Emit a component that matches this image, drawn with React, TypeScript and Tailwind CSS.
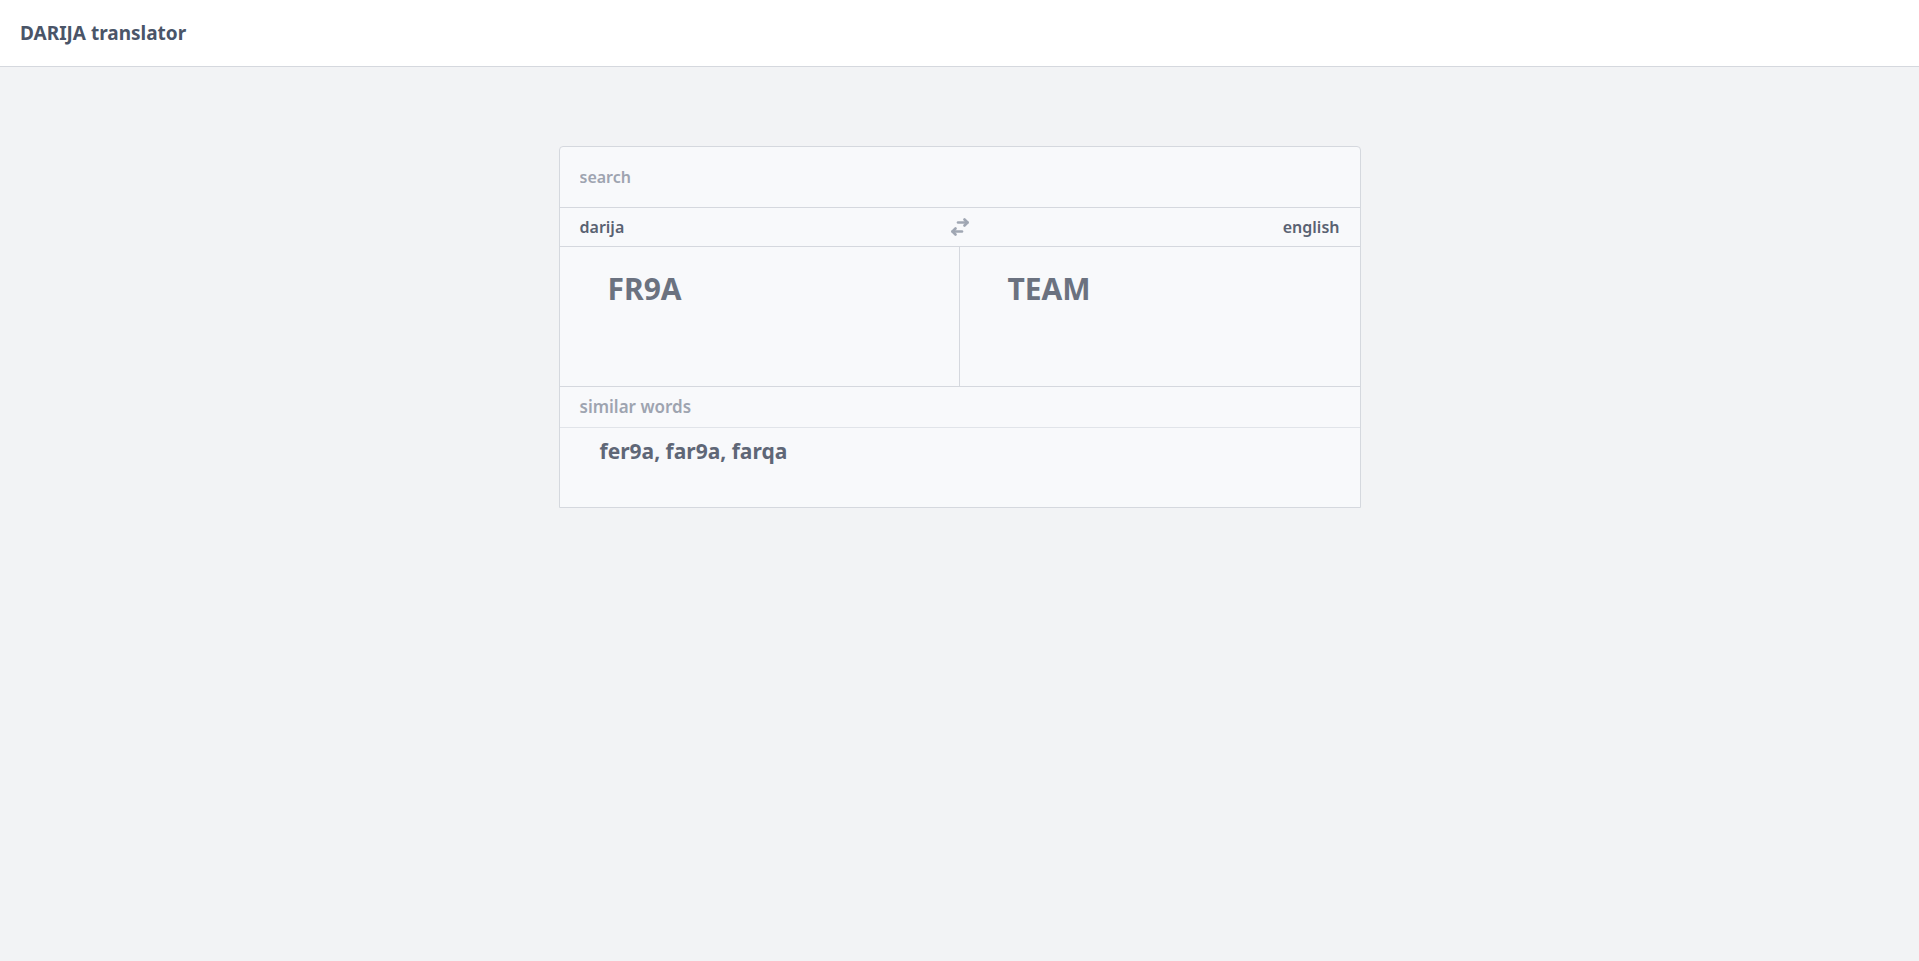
const font = { fontFamily: '"Noto Sans", "Open Sans", sans-serif' };

function SwapIcon() {
  return (
    <svg width="18" height="18" viewBox="0 0 18 18" fill="none" stroke="#a0a7b3" strokeWidth="2.6" strokeLinecap="round" strokeLinejoin="round">
      <path d="M7 4.5h9.5" />
      <path d="M13.5 1.5l3 3-3 3" />
      <path d="M1.5 13.5h9.5" />
      <path d="M4.5 10.5l-3 3 3 3" />
    </svg>
  );
}

export default function App() {
  return (
    <div className="min-h-screen bg-[#f2f3f5]" style={font}>
      <header className="h-[67px] bg-white border-b border-[#d5d8de] flex items-center px-5">
        <h1 className="text-[19px] font-bold text-[#4a5568]">DARIJA translator</h1>
      </header>

      <main className="pt-[79px] flex justify-center">
        <div className="w-[802px] bg-[#f8f9fb] border border-[#d5d8de] rounded-t-sm">
          {/* search */}
          <div className="h-[61px] flex items-center px-5 border-b border-[#d5d8de]">
            <input
              className="w-full bg-transparent outline-none text-base font-semibold text-[#4a5568] placeholder:text-[#9ea4b0]"
              placeholder="search"
            />
          </div>

          {/* languages */}
          <div className="h-[39px] flex items-center justify-between px-5 border-b border-[#d5d8de] text-base font-semibold text-[#5a6272]">
            <span className="w-24">darija</span>
            <SwapIcon />
            <span className="w-24 text-right">english</span>
          </div>

          {/* translation */}
          <div className="h-[140px] grid grid-cols-2 border-b border-[#d5d8de]">
            <div className="pl-12 pt-6 border-r border-[#d5d8de]">
              <p className="text-3xl font-bold text-[#6b7280]">FR9A</p>
            </div>
            <div className="pl-12 pt-6">
              <p className="text-3xl font-bold text-[#6b7280]">TEAM</p>
            </div>
          </div>

          {/* similar words */}
          <div className="h-[41px] flex items-center px-5 border-b border-[#e1e4e9] text-[17px] font-semibold text-[#9ea4b0]">
            similar words
          </div>
          <div className="h-[79px] pl-10 pt-2">
            <p className="text-[21px] font-bold text-[#5f6777]">fer9a, far9a, farqa</p>
          </div>
        </div>
      </main>
    </div>
  );
}
